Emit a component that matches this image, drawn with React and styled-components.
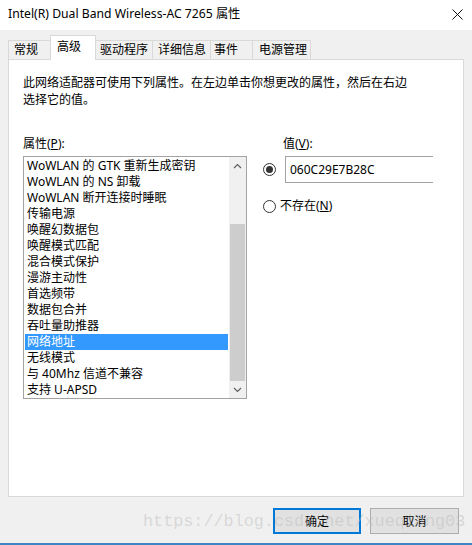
import React from "react";
import styled, { createGlobalStyle } from "styled-components";

const GlobalStyle = createGlobalStyle`
  html, body { margin: 0; padding: 0; background: #f0f0f0; }
  body { font-family: "Noto Sans", "Noto Sans CJK SC", sans-serif; }
`;

const UI = `"Segoe UI", "Noto Sans", "Noto Sans CJK SC", sans-serif`;

const Window = styled.div`
  position: relative;
  width: 472px;
  height: 545px;
  box-sizing: border-box;
  background: #f0f0f0;
  border-bottom: 2px solid #3c86c4;
  display: flex;
  flex-direction: column;
  overflow: hidden;
  font-family: ${UI};
  font-size: 12px;
  color: #000;
`;

const TitleBar = styled.div`
  height: 30px;
  background: #fff;
  display: flex;
  align-items: center;
  justify-content: space-between;
  padding: 0 9px 2px 8px;
  box-sizing: border-box;
  flex-shrink: 0;
`;

const Title = styled.span`
  font-size: 12.2px;
  color: #000;
  line-height: 16px;
`;

const Body = styled.div`
  padding: 6px 8px 0 8px;
  display: flex;
  flex-direction: column;
`;

const TabStrip = styled.div`
  display: flex;
  align-items: flex-end;
  height: 24px;
  position: relative;
  z-index: 1;
`;

const Tab = styled.div`
  box-sizing: border-box;
  width: ${(p) => p.$w}px;
  height: ${(p) => (p.$active ? 25 : 20)}px;
  padding-left: ${(p) => p.$pl}px;
  display: flex;
  align-items: center;
  padding-bottom: ${(p) => (p.$active ? 3 : 0)}px;
  background: ${(p) => (p.$active ? "#fff" : "#f0f0f0")};
  border: 1px solid #d9d9d9;
  border-bottom: ${(p) => (p.$active ? "none" : "1px solid #d9d9d9")};
  margin-left: -1px;
  font-size: 12px;
  line-height: 16px;
  white-space: nowrap;
  &:first-child { margin-left: 0; }
`;

const Panel = styled.div`
  box-sizing: border-box;
  width: 456px;
  height: 438px;
  margin-top: -1px;
  background: #fff;
  border: 1px solid #d9d9d9;
  padding: 14px 14px 0 14px;
`;

const Description = styled.p`
  margin: 0;
  font-size: 12px;
  line-height: 17px;
  width: 390px;
`;

const Columns = styled.div`
  display: grid;
  grid-template-columns: 224px 1fr;
  column-gap: 15px;
  margin-top: 28px;
`;

const Column = styled.div`
  display: flex;
  flex-direction: column;
`;

const Label = styled.div`
  font-size: 12px;
  line-height: 16px;
  padding-left: ${(p) => p.$pl || 0}px;
  margin-bottom: 4px;
  white-space: nowrap;
`;

const U = styled.span`
  text-decoration: underline;
`;

const ListBox = styled.div`
  box-sizing: border-box;
  width: 224px;
  height: 243px;
  border: 1px solid #a3a3a3;
  display: flex;
  background: #fff;
  overflow: hidden;
`;

const Items = styled.div`
  flex: 1;
  padding: 1px 1px 0 1px;
  display: flex;
  flex-direction: column;
`;

const Item = styled.div`
  height: 16px;
  flex-shrink: 0;
  line-height: 16px;
  padding-left: 2px;
  font-size: 12px;
  white-space: nowrap;
  background: ${(p) => (p.$selected ? "#3399ff" : "transparent")};
  color: ${(p) => (p.$selected ? "#fff" : "#000")};
`;

const ScrollBar = styled.div`
  width: 17px;
  background: #f0f0f0;
  display: flex;
  flex-direction: column;
`;

const Arrow = styled.div`
  height: 17px;
  display: flex;
  align-items: center;
  justify-content: center;
  flex-shrink: 0;
`;

const Track = styled.div`
  flex: 1;
  display: flex;
  flex-direction: column;
  justify-content: flex-end;
  align-items: center;
`;

const Thumb = styled.div`
  width: 15px;
  height: 157px;
  background: #cdcdcd;
`;

const OptionRow = styled.div`
  display: flex;
  align-items: center;
  margin-left: 1px;
  margin-top: ${(p) => p.$mt || 0}px;
`;

const Radio = styled.span`
  box-sizing: border-box;
  width: 13px;
  height: 13px;
  border-radius: 50%;
  border: 1px solid #333;
  background: #fff;
  display: flex;
  align-items: center;
  justify-content: center;
  flex-shrink: 0;
  margin-right: ${(p) => p.$mr}px;
  &::after {
    content: "";
    display: ${(p) => (p.$checked ? "block" : "none")};
    width: 7px;
    height: 7px;
    border-radius: 50%;
    background: #333;
  }
`;

const ValueBox = styled.div`
  box-sizing: border-box;
  width: 148px;
  height: 27px;
  border: 1px solid #a3a3a3;
  border-right: none;
  padding-left: 4px;
  display: flex;
  align-items: center;
  font-size: 12px;
`;

const OptionText = styled.span`
  font-size: 12px;
  line-height: 16px;
`;

const Footer = styled.div`
  display: flex;
  justify-content: flex-end;
  gap: 9px;
  padding: 11px 5px 0 0;
`;

const Button = styled.div`
  box-sizing: border-box;
  width: ${(p) => p.$w}px;
  height: 26px;
  background: #e1e1e1;
  border: ${(p) => (p.$primary ? "2px solid #0078d7" : "1px solid #adadad")};
  display: flex;
  align-items: center;
  justify-content: center;
  font-size: 12px;
`;

const Watermark = styled.div`
  position: absolute;
  left: 143px;
  top: 511px;
  font-family: "Liberation Mono", monospace;
  font-size: 16.8px;
  line-height: 22px;
  color: rgba(185, 185, 185, 0.45);
  pointer-events: none;
  white-space: nowrap;
  z-index: 5;
`;

const tabs = [
  { label: "常规", w: 43, pl: 5 },
  { label: "高级", w: 46, pl: 6, active: true },
  { label: "驱动程序", w: 58, pl: 4 },
  { label: "详细信息", w: 59, pl: 5 },
  { label: "事件", w: 43, pl: 3 },
  { label: "电源管理", w: 59, pl: 6 },
];

const items = [
  "WoWLAN 的 GTK 重新生成密钥",
  "WoWLAN 的 NS 卸载",
  "WoWLAN 断开连接时睡眠",
  "传输电源",
  "唤醒幻数据包",
  "唤醒模式匹配",
  "混合模式保护",
  "漫游主动性",
  "首选频带",
  "数据包合并",
  "吞吐量助推器",
  "网络地址",
  "无线模式",
  "与 40Mhz 信道不兼容",
  "支持 U-APSD",
];

const Chevron = ({ up }) => (
  <svg width="9" height="6" viewBox="0 0 9 6">
    <polyline
      points={up ? "1,5 4.5,1.5 8,5" : "1,1 4.5,4.5 8,1"}
      fill="none"
      stroke="#606060"
      strokeWidth="1.2"
    />
  </svg>
);

const CloseIcon = () => (
  <svg width="11" height="11" viewBox="0 0 11 11">
    <path d="M0.5 0.5 L10.5 10.5 M10.5 0.5 L0.5 10.5" stroke="#111" strokeWidth="1" fill="none" />
  </svg>
);

export default function App() {
  return (
    <>
      <GlobalStyle />
      <Window>
        <TitleBar>
          <Title>Intel(R) Dual Band Wireless-AC 7265 属性</Title>
          <CloseIcon />
        </TitleBar>
        <Body>
          <TabStrip>
            {tabs.map((t) => (
              <Tab key={t.label} $w={t.w} $pl={t.pl} $active={t.active}>
                {t.label}
              </Tab>
            ))}
          </TabStrip>
          <Panel>
            <Description>
              此网络适配器可使用下列属性。在左边单击你想更改的属性，然后在右边选择它的值。
            </Description>
            <Columns>
              <Column>
                <Label>
                  属性(<U>P</U>):
                </Label>
                <ListBox>
                  <Items>
                    {items.map((it, i) => (
                      <Item key={it} $selected={i === 11}>
                        {it}
                      </Item>
                    ))}
                  </Items>
                  <ScrollBar>
                    <Arrow>
                      <Chevron up />
                    </Arrow>
                    <Track>
                      <Thumb />
                    </Track>
                    <Arrow>
                      <Chevron />
                    </Arrow>
                  </ScrollBar>
                </ListBox>
              </Column>
              <Column>
                <Label $pl={21}>
                  值(<U>V</U>):
                </Label>
                <OptionRow>
                  <Radio $checked $mr={9} />
                  <ValueBox>060C29E7B28C</ValueBox>
                </OptionRow>
                <OptionRow $mt={15}>
                  <Radio $mr={4} />
                  <OptionText>
                    不存在(<U>N</U>)
                  </OptionText>
                </OptionRow>
              </Column>
            </Columns>
          </Panel>
          <Footer>
            <Button $primary $w={88}>确定</Button>
            <Button $w={89}>取消</Button>
          </Footer>
        </Body>
        <Watermark>https://blog.csdn.net/xueqiang03</Watermark>
      </Window>
    </>
  );
}
